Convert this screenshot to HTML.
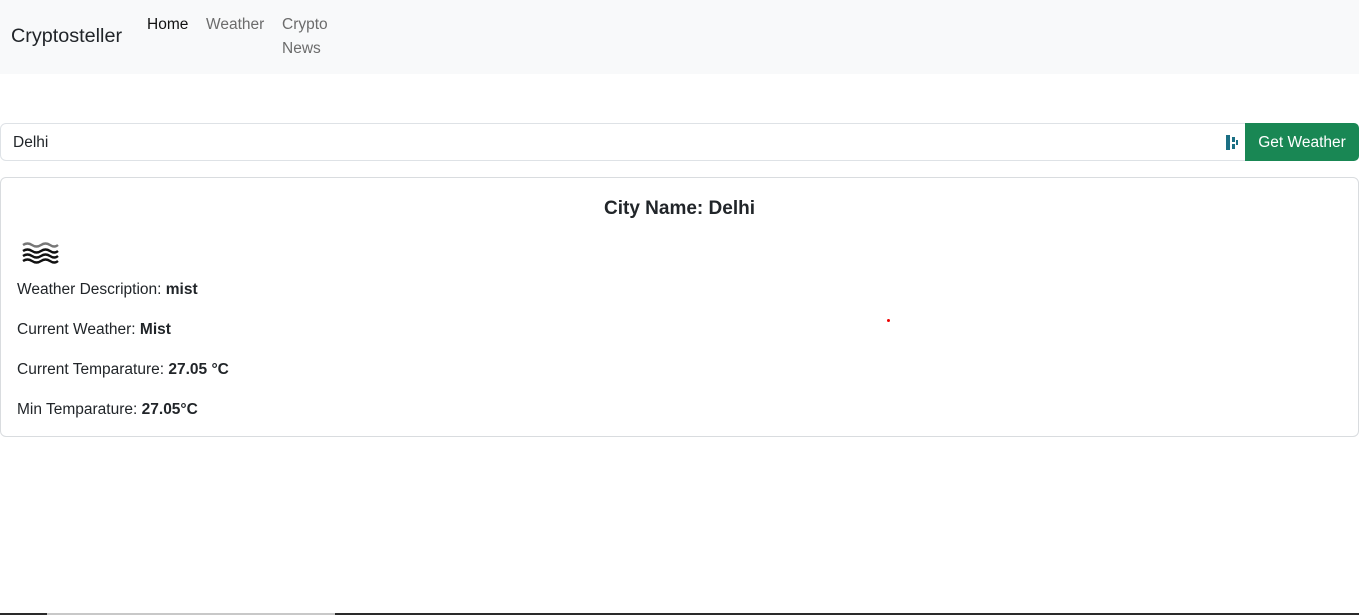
<!DOCTYPE html>
<html><head><meta charset="utf-8"><style>
*{box-sizing:border-box;margin:0;padding:0}
body{width:1359px;height:615px;background:#fff;font-family:"Liberation Sans",sans-serif;color:#212529;position:relative;overflow:hidden}
.nav{position:absolute;left:0;top:0;width:1359px;height:74px;background:#f8f9fa}
.brand{position:absolute;left:11px;top:25px;font-size:19.8px;color:#212529}
.nl{position:absolute;font-size:15.5px;color:#6c6c6c;line-height:24px}
.inp{position:absolute;left:0;top:123px;width:1246px;height:38px;border:1px solid #dee2e6;border-radius:6px 0 0 6px;font-size:15.5px;padding:10px 12px}
.btn{position:absolute;left:1245px;top:123px;width:114px;height:38px;background:#198754;color:#fff;font-size:15.5px;text-align:center;line-height:40px;border-radius:0 5px 5px 0}
.card{position:absolute;left:0;top:177px;width:1359px;height:260px;border:1px solid #d9dcdf;border-radius:6px}
.title{position:absolute;top:20px;width:100%;text-align:center;font-size:19px;font-weight:bold;color:#212529}
.p{position:absolute;left:16px;font-size:15.5px}
</style></head><body>
<div class="nav">
<div class="brand">Cryptosteller</div>
<div class="nl" style="left:147px;top:13px;color:#111">Home</div>
<div class="nl" style="left:206px;top:13px">Weather</div>
<div class="nl" style="left:282px;top:13px">Crypto<br>News</div>
</div>
<div class="inp">Delhi
<svg style="position:absolute;left:1225px;top:11px" width="13" height="15"><rect x="0" y="0" width="4" height="15" fill="#1b6f84"/><rect x="6" y="2" width="3" height="5" fill="#1b6f84"/><rect x="6" y="9" width="3" height="5" fill="#1b6f84"/><rect x="10" y="5" width="2" height="5" fill="#1b6f84"/></svg>
</div>
<div class="btn">Get Weather</div>
<div class="card">
<div class="title">City Name: Delhi</div>
<svg style="position:absolute;left:21px;top:63px" width="38" height="24" fill="none" stroke="#111" stroke-width="2.4"><path d="M1 4q4.5-3 9 0t9 0t9 0t8 0" stroke="#777"/><path d="M1 10q4.5-3 9 0t9 0t9 0t8 0"/><path d="M1 15q4.5-3 9 0t9 0t9 0t8 0"/><path d="M1 20q4.5-3 9 0t9 0t9 0t8 0"/></svg>
<div class="p" style="top:103px">Weather Description: <b>mist</b></div>
<div class="p" style="top:143px">Current Weather: <b>Mist</b></div>
<div class="p" style="top:183px">Current Temparature: <b>27.05 °C</b></div>
<div class="p" style="top:223px">Min Temparature: <b>27.05°C</b></div>
</div>
<div style="position:absolute;left:887px;top:319px;width:3px;height:3px;background:#e00;border-radius:50%"></div>
<div style="position:absolute;left:0;top:613px;width:1359px;height:2px;background:#2a2a2a"></div>
<div style="position:absolute;left:47px;top:613px;width:288px;height:2px;background:#c8c8c8"></div>
</body></html>
